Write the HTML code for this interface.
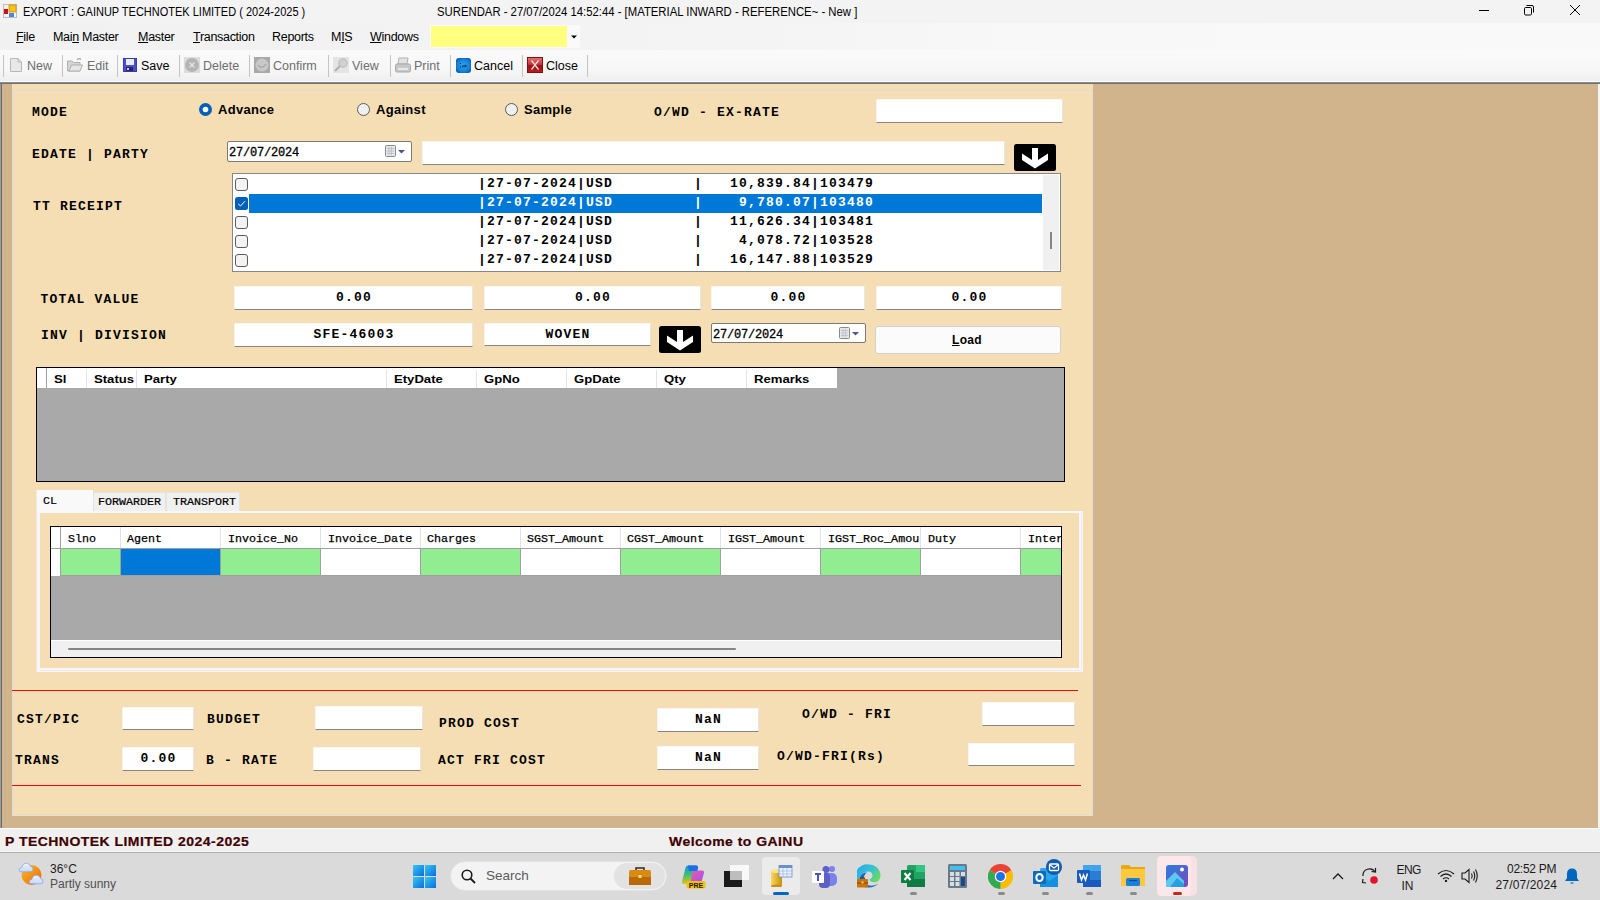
<!DOCTYPE html>
<html><head><meta charset="utf-8">
<style>
*{margin:0;padding:0;box-sizing:border-box}
html,body{width:1600px;height:900px;overflow:hidden;background:#f0f0f0;font-family:"Liberation Sans",sans-serif;position:relative}
.a{position:absolute}
.t{position:absolute;white-space:pre;line-height:1}
.mono{font-family:"Liberation Mono",monospace;font-weight:bold}
.sans{font-family:"Liberation Sans",sans-serif}
.lbl{font-family:"Liberation Mono",monospace;font-weight:bold;font-size:13px;letter-spacing:1.2px;color:#000}
.tb{position:absolute;background:#fff;border-bottom:1px solid #858585;border-right:1px solid #e6e6e6;border-left:1px solid #f4f4f4;border-top:1px solid #f6f6f6;border-radius:1px}
.tbtxt{font-family:"Liberation Mono",monospace;font-weight:bold;font-size:13px;letter-spacing:1.2px;padding-left:1.2px;color:#000;text-align:center;position:absolute;left:0;right:0;line-height:1}
.g1h{font-family:"Liberation Sans",sans-serif;font-weight:bold;font-size:11.5px;color:#000;transform:scaleX(1.14);transform-origin:0 0}
.g2h{font-family:"Liberation Mono",monospace;font-weight:normal;-webkit-text-stroke:0.25px #000;font-size:11.7px;color:#000}
</style></head><body>

<!-- title bar -->
<div class="a" style="left:0;top:0;width:1600px;height:23px;background:#f3f3f3"></div>
<!-- menu bar -->
<div class="a" style="left:0;top:23px;width:1600px;height:27px;background:linear-gradient(to right,#f1f1f1,#f3f3f3 40%,#f8f8f8 65%,#f9f9f9)"></div>
<!-- toolbar -->
<div class="a" style="left:0;top:50px;width:1600px;height:31px;background:linear-gradient(#fafafa,#f7f7f7 60%,#efefef)"></div><div class="a" style="left:0;top:81px;width:1600px;height:1px;background:#fdfdfd"></div>
<div class="a" style="left:0;top:82px;width:1600px;height:2px;background:linear-gradient(#9a9a9a,#5f6368)"></div>

<!-- MDI area -->
<div class="a" style="left:0;top:84px;width:1600px;height:744px;background:#d2b48c"></div>
<div class="a" style="left:0;top:84px;width:1px;height:744px;background:#9c9c9c"></div><div class="a" style="left:1px;top:84px;width:1px;height:744px;background:#6a6a6a"></div>
<div class="a" style="left:1598px;top:84px;width:2px;height:744px;background:#f4f4f4"></div>

<!-- form panel -->
<div class="a" style="left:12px;top:84px;width:1081px;height:732px;background:#f5deb3"></div>
<div class="a" style="left:12px;top:90px;width:1081px;height:725px;border:1px solid #dcdcdc"></div>

<!-- status bar -->
<div class="a" style="left:0;top:828px;width:1600px;height:1px;background:#fff"></div>
<div class="a" style="left:0;top:829px;width:1600px;height:23px;background:#f0f0f0"></div>

<!-- taskbar -->
<div class="a" style="left:0;top:851px;width:1600px;height:1px;background:#f5f5f5"></div><div class="a" style="left:0;top:852px;width:1600px;height:1px;background:#b0b0b0"></div>
<div class="a" style="left:0;top:853px;width:1600px;height:47px;background:#dadada"></div>

<!-- TITLE CONTENT -->
<svg class="a" style="left:3px;top:4px" width="14" height="14" viewBox="0 0 14 14">
<rect x="0.5" y="0.5" width="13" height="13" fill="#f4f4f4" stroke="#bdbdbd"/>
<rect x="6" y="1" width="7" height="7" fill="#f7c21a" stroke="#c9930a" stroke-width="0.8"/>
<rect x="1" y="5" width="4" height="5" fill="#d01010"/>
<rect x="6" y="9" width="5" height="4" fill="#4a86e8"/>
</svg>
<div class="t" style="left:23px;top:6px;font-size:12.5px;color:#000;transform:scaleX(0.88);transform-origin:0 0">EXPORT : GAINUP TECHNOTEK LIMITED ( 2024-2025 )</div>
<div class="t" style="left:437px;top:6px;font-size:12.5px;color:#000;transform:scaleX(0.906);transform-origin:0 0">SURENDAR - 27/07/2024 14:52:44 - [MATERIAL INWARD - REFERENCE~ - New ]</div>
<div class="a" style="left:1479px;top:10px;width:10px;height:1px;background:#000"></div>
<svg class="a" style="left:1523px;top:4px" width="12" height="12" viewBox="0 0 12 12"><rect x="1.5" y="3.5" width="7" height="7.5" rx="1.2" fill="none" stroke="#000" stroke-width="1"/><path d="M3.5 1.5 H9 Q10.5 1.5 10.5 3 V8.5" fill="none" stroke="#000" stroke-width="1"/></svg>
<svg class="a" style="left:1569px;top:4px" width="12" height="12" viewBox="0 0 12 12"><path d="M1 1 L11 11 M11 1 L1 11" stroke="#000" stroke-width="1"/></svg>

<!-- MENU -->
<div class="t" style="left:16px;top:31px;font-size:12.5px;color:#000;letter-spacing:-0.3px"><u>F</u>ile</div>
<div class="t" style="left:53px;top:31px;font-size:12.5px;color:#000;letter-spacing:-0.3px">Mai<u>n</u> Master</div>
<div class="t" style="left:138px;top:31px;font-size:12.5px;color:#000;letter-spacing:-0.3px"><u>M</u>aster</div>
<div class="t" style="left:193px;top:31px;font-size:12.5px;color:#000;letter-spacing:-0.3px"><u>T</u>ransaction</div>
<div class="t" style="left:272px;top:31px;font-size:12.5px;color:#000;letter-spacing:-0.3px">Reports</div>
<div class="t" style="left:331px;top:31px;font-size:12.5px;color:#000;letter-spacing:-0.3px">M<u>I</u>S</div>
<div class="t" style="left:370px;top:31px;font-size:12.5px;color:#000;letter-spacing:-0.3px"><u>W</u>indows</div>
<div class="a" style="left:430px;top:25px;width:150px;height:23px;background:#fafafa"></div>
<div class="a" style="left:431px;top:26px;width:136px;height:21px;background:#ffff80"></div>
<svg class="a" style="left:571px;top:35px" width="6" height="4" viewBox="0 0 6 4"><path d="M0 0.5 H6 L3 3.5Z" fill="#000"/></svg>
<!-- TOOLBAR -->
<div class="a" style="left:3px;top:55px;width:1px;height:22px;background:#c4c4c4"></div>
<div class="a" style="left:62px;top:55px;width:1px;height:22px;background:#c4c4c4"></div>
<div class="a" style="left:117px;top:55px;width:1px;height:22px;background:#c4c4c4"></div>
<div class="a" style="left:179px;top:55px;width:1px;height:22px;background:#c4c4c4"></div>
<div class="a" style="left:249px;top:55px;width:1px;height:22px;background:#c4c4c4"></div>
<div class="a" style="left:328px;top:55px;width:1px;height:22px;background:#c4c4c4"></div>
<div class="a" style="left:390px;top:55px;width:1px;height:22px;background:#c4c4c4"></div>
<div class="a" style="left:450px;top:55px;width:1px;height:22px;background:#c4c4c4"></div>
<div class="a" style="left:522px;top:55px;width:1px;height:22px;background:#c4c4c4"></div>
<div class="a" style="left:587px;top:55px;width:1px;height:22px;background:#c4c4c4"></div>
<!-- New icon -->
<svg class="a" style="left:10px;top:58px" width="12" height="14" viewBox="0 0 12 14"><path d="M0.5 0.5 H8 L11.5 4 V13.5 H0.5Z" fill="#e8e8e8" stroke="#b8b8b8"/><path d="M8 0.5 V4 H11.5" fill="none" stroke="#b8b8b8"/></svg>
<div class="t" style="left:27px;top:60px;font-size:12.5px;color:#6e6e6e">New</div>
<!-- Edit icon -->
<svg class="a" style="left:67px;top:57px" width="16" height="15" viewBox="0 0 16 15"><path d="M0.5 4 H5 L6.5 5.5 H13 V14 H0.5Z" fill="#d6d6d6" stroke="#b0b0b0"/><path d="M2 14 L4.5 8 H15.5 L13 14Z" fill="#e6e6e6" stroke="#b0b0b0"/><path d="M10 3 Q12 0.5 14 2.5" fill="none" stroke="#a8a8a8" stroke-width="1.3"/></svg>
<div class="t" style="left:87px;top:60px;font-size:12.5px;color:#6e6e6e">Edit</div>
<!-- Save icon -->
<svg class="a" style="left:123px;top:58px" width="14" height="14" viewBox="0 0 14 14"><rect x="0" y="0" width="14" height="14" fill="#3a3aa8"/><rect x="1" y="1" width="12" height="12" fill="#4e4ec8"/><rect x="3" y="1" width="8" height="6" fill="#e8ecf8"/><rect x="3" y="9" width="7" height="4" fill="#26266e"/><rect x="4" y="10" width="2" height="2" fill="#c8c8e8"/></svg>
<div class="t" style="left:141px;top:60px;font-size:12.5px;color:#000">Save</div>
<!-- Delete icon -->
<svg class="a" style="left:184px;top:57px" width="16" height="16" viewBox="0 0 16 16"><rect width="16" height="16" fill="#dcdcdc"/><circle cx="8" cy="8" r="7" fill="#b4b4b4"/><path d="M5.5 5.5 L10.5 10.5 M10.5 5.5 L5.5 10.5" stroke="#e6e6e6" stroke-width="1.2"/></svg>
<div class="t" style="left:203px;top:60px;font-size:12.5px;color:#6e6e6e">Delete</div>
<!-- Confirm icon -->
<svg class="a" style="left:254px;top:57px" width="16" height="16" viewBox="0 0 16 16"><rect width="16" height="16" fill="#a8a8a8"/><circle cx="8" cy="8" r="6.5" fill="#c8c8c8"/><path d="M4 8 Q8 13 12 7" fill="none" stroke="#a0a0a0" stroke-width="1.2"/></svg>
<div class="t" style="left:273px;top:60px;font-size:12.5px;color:#6e6e6e">Confirm</div>
<!-- View icon -->
<svg class="a" style="left:333px;top:57px" width="16" height="16" viewBox="0 0 16 16"><rect width="16" height="16" fill="#e4e4e4"/><circle cx="10" cy="6" r="4.2" fill="#d0d0d0" stroke="#b8b8b8"/><path d="M7 9 L2 14" stroke="#b0b0b0" stroke-width="2.2"/></svg>
<div class="t" style="left:352px;top:60px;font-size:12.5px;color:#6e6e6e">View</div>
<!-- Print icon -->
<svg class="a" style="left:395px;top:57px" width="16" height="16" viewBox="0 0 16 16"><path d="M4 1 H13 L12 7 H3Z" fill="#e2e2e2" stroke="#b4b4b4"/><rect x="0.5" y="7" width="15" height="8" rx="1.5" fill="#c8c8c8" stroke="#a8a8a8"/><rect x="3" y="11" width="10" height="2" fill="#e8e8e8"/></svg>
<div class="t" style="left:414px;top:60px;font-size:12.5px;color:#6e6e6e">Print</div>
<!-- Cancel icon -->
<svg class="a" style="left:456px;top:58px" width="15" height="15" viewBox="0 0 15 15"><defs><radialGradient id="cg" cx="0.5" cy="0.5" r="0.6"><stop offset="0" stop-color="#30a8f4"/><stop offset="0.7" stop-color="#1280d8"/><stop offset="1" stop-color="#0a58b0"/></radialGradient></defs><rect x="0" y="0" width="15" height="15" rx="3" fill="url(#cg)"/><rect x="4" y="5" width="1" height="1" fill="#05203a"/><rect x="4" y="8.5" width="1" height="1" fill="#05203a"/><rect x="6.5" y="7" width="1" height="2.5" fill="#05203a"/><path d="M8.5 6.5 L11 8 L8.5 9.5Z" fill="#05203a"/></svg>
<div class="t" style="left:474px;top:60px;font-size:12.5px;color:#000">Cancel</div>
<!-- Close icon -->
<svg class="a" style="left:527px;top:57px" width="16" height="16" viewBox="0 0 16 16"><defs><linearGradient id="xg" x1="0" y1="0" x2="0" y2="1"><stop offset="0" stop-color="#e87878"/><stop offset="0.45" stop-color="#c83838"/><stop offset="0.55" stop-color="#a01010"/><stop offset="1" stop-color="#b82020"/></linearGradient></defs><rect width="16" height="16" fill="url(#xg)"/><rect x="0.5" y="0.5" width="15" height="15" fill="none" stroke="#801010" stroke-width="1"/><path d="M4.5 3.5 L11.5 12.5 M11.5 3.5 L4.5 12.5" stroke="#e8e0e0" stroke-width="1.3"/></svg>
<div class="t" style="left:546px;top:60px;font-size:12.5px;color:#000">Close</div>
<!-- FORM ROW 1 -->
<div class="t lbl" style="left:32px;top:106px">MODE</div>
<svg class="a" style="left:199px;top:103px" width="13" height="13" viewBox="0 0 13 13"><circle cx="6.5" cy="6.5" r="6.5" fill="#005fb8"/><circle cx="6.5" cy="6.5" r="2.8" fill="#fff"/></svg>
<div class="t" style="left:218px;top:103px;font-size:13px;font-weight:bold;color:#000;letter-spacing:0.3px">Advance</div>
<svg class="a" style="left:357px;top:103px" width="13" height="13" viewBox="0 0 13 13"><circle cx="6.5" cy="6.5" r="6" fill="#f0f0f0" stroke="#5a5a5a" stroke-width="1"/></svg>
<div class="t" style="left:376px;top:103px;font-size:13px;font-weight:bold;color:#000;letter-spacing:0.3px">Against</div>
<svg class="a" style="left:505px;top:103px" width="13" height="13" viewBox="0 0 13 13"><circle cx="6.5" cy="6.5" r="6" fill="#f0f0f0" stroke="#5a5a5a" stroke-width="1"/></svg>
<div class="t" style="left:524px;top:103px;font-size:13px;font-weight:bold;color:#000;letter-spacing:0.3px">Sample</div>
<div class="t lbl" style="left:654px;top:106px">O/WD - EX-RATE</div>
<div class="tb" style="left:876px;top:99px;width:187px;height:24px"></div>

<!-- ROW 2 -->
<div class="t lbl" style="left:32px;top:148px">EDATE | PARTY</div>
<div class="a" style="left:227px;top:141px;width:185px;height:21px;background:#fff;border:1px solid #7a7a7a;border-radius:2px"></div>
<div class="t mono" style="left:229px;top:146.5px;font-size:12px;color:#000;font-weight:normal;-webkit-text-stroke:0.3px #000;letter-spacing:-0.2px">27/07/2024</div>
<svg class="a" style="left:385px;top:145px" width="22" height="12" viewBox="0 0 22 12"><rect x="0.5" y="0.5" width="10" height="11" rx="1" fill="#e4e6ea" stroke="#8a8a8a"/><path d="M2 3.5H9M2 6H9M2 8.5H9M4 2V10M6.5 2V10" stroke="#b8bcc4" stroke-width="0.8"/><path d="M13 5 H20 L16.5 8.5Z" fill="#4a5a78"/></svg>
<div class="tb" style="left:422px;top:141px;width:583px;height:24px"></div>
<svg class="a" style="left:1014px;top:144px" width="42" height="27" viewBox="0 0 42 27"><rect x="0" y="0" width="42" height="27" rx="2.5" fill="#000"/><path d="M18 4 H24 V16 L34 9.5 V16 L21 24.5 L8 16 V9.5 L18 16Z" fill="#fff"/></svg>

<!-- LIST -->
<div class="t lbl" style="left:33px;top:199.5px">TT RECEIPT</div>
<div class="a" style="left:232px;top:173px;width:829px;height:99px;background:#fff;border:1px solid #828790"></div>
<div class="a" style="left:1043px;top:175px;width:16px;height:95px;background:#f0f0f0"></div>
<div class="a" style="left:1050px;top:232px;width:2px;height:17px;background:#868686"></div>
<div class="a" style="left:249px;top:194px;width:793px;height:19px;background:#0078d7"></div>
<!-- checkboxes -->
<svg class="a" style="left:235px;top:178px" width="13" height="13" viewBox="0 0 13 13"><rect x="0.5" y="0.5" width="12" height="12" rx="2.5" fill="#f3f3f3" stroke="#5c5c5c"/></svg>
<svg class="a" style="left:235px;top:197px" width="13" height="13" viewBox="0 0 13 13"><rect x="0" y="0" width="13" height="13" rx="2.5" fill="#005fb8"/><path d="M3.2 6.8 L5.5 9 L10 4.2" fill="none" stroke="#fff" stroke-width="1"/></svg>
<svg class="a" style="left:235px;top:216px" width="13" height="13" viewBox="0 0 13 13"><rect x="0.5" y="0.5" width="12" height="12" rx="2.5" fill="#f3f3f3" stroke="#5c5c5c"/></svg>
<svg class="a" style="left:235px;top:235px" width="13" height="13" viewBox="0 0 13 13"><rect x="0.5" y="0.5" width="12" height="12" rx="2.5" fill="#f3f3f3" stroke="#5c5c5c"/></svg>
<svg class="a" style="left:235px;top:254px" width="13" height="13" viewBox="0 0 13 13"><rect x="0.5" y="0.5" width="12" height="12" rx="2.5" fill="#f3f3f3" stroke="#5c5c5c"/></svg>
<div class="t lbl" style="left:478px;top:177px">|27-07-2024|USD         |   10,839.84|103479</div>
<div class="t lbl" style="left:478px;top:196px;color:#fff">|27-07-2024|USD         |    9,780.07|103480</div>
<div class="t lbl" style="left:478px;top:215px">|27-07-2024|USD         |   11,626.34|103481</div>
<div class="t lbl" style="left:478px;top:234px">|27-07-2024|USD         |    4,078.72|103528</div>
<div class="t lbl" style="left:478px;top:253px">|27-07-2024|USD         |   16,147.88|103529</div>

<!-- TOTAL VALUE -->
<div class="t lbl" style="left:40.5px;top:293px">TOTAL VALUE</div>
<div class="tb" style="left:234px;top:286px;width:239px;height:24px"><div class="tbtxt" style="top:4px">0.00</div></div>
<div class="tb" style="left:484px;top:286px;width:217px;height:24px"><div class="tbtxt" style="top:4px">0.00</div></div>
<div class="tb" style="left:711px;top:286px;width:154px;height:24px"><div class="tbtxt" style="top:4px">0.00</div></div>
<div class="tb" style="left:876px;top:286px;width:186px;height:24px"><div class="tbtxt" style="top:4px">0.00</div></div>

<!-- INV | DIVISION -->
<div class="t lbl" style="left:41px;top:329px">INV | DIVISION</div>
<div class="tb" style="left:234px;top:323px;width:239px;height:24px"><div class="tbtxt" style="top:4px">SFE-46003</div></div>
<div class="tb" style="left:484px;top:323px;width:167px;height:23px"><div class="tbtxt" style="top:4px">WOVEN</div></div>
<svg class="a" style="left:659px;top:326px" width="42" height="27" viewBox="0 0 42 27"><rect x="0" y="0" width="42" height="27" rx="2.5" fill="#000"/><path d="M18 4 H24 V16 L34 9.5 V16 L21 24.5 L8 16 V9.5 L18 16Z" fill="#fff"/></svg>
<div class="a" style="left:711px;top:323px;width:155px;height:20px;background:#fff;border:1px solid #7a7a7a;border-radius:2px"></div>
<div class="t mono" style="left:713px;top:328.5px;font-size:12px;color:#000;font-weight:normal;-webkit-text-stroke:0.3px #000;letter-spacing:-0.2px">27/07/2024</div>
<svg class="a" style="left:839px;top:327px" width="22" height="12" viewBox="0 0 22 12"><rect x="0.5" y="0.5" width="10" height="11" rx="1" fill="#e4e6ea" stroke="#8a8a8a"/><path d="M2 3.5H9M2 6H9M2 8.5H9M4 2V10M6.5 2V10" stroke="#b8bcc4" stroke-width="0.8"/><path d="M13 5 H20 L16.5 8.5Z" fill="#4a5a78"/></svg>
<div class="a" style="left:875px;top:326px;width:186px;height:28px;background:#fbfbfb;border:1px solid #d0d0d0;border-radius:3px"></div>
<div class="t" style="left:952px;top:334px;font-size:12px;font-weight:bold;color:#000;letter-spacing:0.3px"><u>L</u>oad</div>
<!-- GRID 1 -->
<div class="a" style="left:36px;top:367px;width:1029px;height:115px;background:#a9a9a9;border:1px solid #000"></div>
<div class="a" style="left:37px;top:368px;width:800px;height:20px;background:#fff"></div>
<div class="a" style="left:46px;top:368px;width:1px;height:20px;background:#a0a0a0"></div>
<div class="a" style="left:86px;top:370px;width:1px;height:18px;background:#e3e3e3"></div>
<div class="a" style="left:136px;top:370px;width:1px;height:18px;background:#e3e3e3"></div>
<div class="a" style="left:386px;top:370px;width:1px;height:18px;background:#e3e3e3"></div>
<div class="a" style="left:476px;top:370px;width:1px;height:18px;background:#e3e3e3"></div>
<div class="a" style="left:566px;top:370px;width:1px;height:18px;background:#e3e3e3"></div>
<div class="a" style="left:656px;top:370px;width:1px;height:18px;background:#e3e3e3"></div>
<div class="a" style="left:746px;top:370px;width:1px;height:18px;background:#e3e3e3"></div>
<div class="t g1h" style="left:54px;top:374px">Sl</div>
<div class="t g1h" style="left:94px;top:374px">Status</div>
<div class="t g1h" style="left:144px;top:374px">Party</div>
<div class="t g1h" style="left:394px;top:374px">EtyDate</div>
<div class="t g1h" style="left:484px;top:374px">GpNo</div>
<div class="t g1h" style="left:574px;top:374px">GpDate</div>
<div class="t g1h" style="left:664px;top:374px">Qty</div>
<div class="t g1h" style="left:754px;top:374px">Remarks</div>

<!-- TABS -->
<div class="a" style="left:93px;top:492px;width:73px;height:20px;background:#f0f0f0;border:1px solid #e3e3e3;border-bottom:none"></div>
<div class="a" style="left:166px;top:492px;width:74px;height:20px;background:#f0f0f0;border:1px solid #e3e3e3;border-bottom:none"></div>
<div class="a" style="left:36px;top:511px;width:1047px;height:161px;border:4px solid #f7f7f9;border-top-width:2px"></div><div class="a" style="left:36px;top:511px;width:1px;height:161px;background:#ebebef"></div><div class="a" style="left:1081px;top:513px;width:1px;height:157px;background:#ebebef"></div><div class="a" style="left:40px;top:670px;width:1041px;height:1px;background:#ebebef"></div>
<div class="a" style="left:36px;top:490px;width:57px;height:23px;background:#f9f9f9"></div><div class="a" style="left:36px;top:490px;width:1px;height:23px;background:#ebebef"></div>
<div class="t mono" style="left:43px;top:496px;font-size:11.7px;color:#000;font-weight:normal;-webkit-text-stroke:0.2px #000">CL</div>
<div class="t mono" style="left:98px;top:497px;font-size:11.7px;color:#000;font-weight:normal;-webkit-text-stroke:0.2px #000">FORWARDER</div>
<div class="t mono" style="left:173px;top:497px;font-size:11.7px;color:#000;font-weight:normal;-webkit-text-stroke:0.2px #000">TRANSPORT</div>

<!-- GRID 2 -->
<div class="a" style="left:50px;top:526px;width:1012px;height:132px;background:#a9a9a9;border:1px solid #000"></div>
<div class="a" style="left:51px;top:527px;width:1010px;height:21px;background:#fff"></div>
<div class="a" style="left:51px;top:548px;width:1010px;height:1px;background:#a0a0a0"></div>
<div class="a" style="left:51px;top:549px;width:9px;height:27px;background:#fff"></div>
<div class="a" style="left:60px;top:527px;width:1px;height:49px;background:#a0a0a0"></div>
<div class="a" style="left:61px;top:549px;width:59px;height:26px;background:#90ee90"></div>
<div class="a" style="left:121px;top:549px;width:99px;height:26px;background:#0078d7"></div>
<div class="a" style="left:221px;top:549px;width:99px;height:26px;background:#90ee90"></div>
<div class="a" style="left:321px;top:549px;width:99px;height:26px;background:#fff"></div>
<div class="a" style="left:421px;top:549px;width:99px;height:26px;background:#90ee90"></div>
<div class="a" style="left:521px;top:549px;width:99px;height:26px;background:#fff"></div>
<div class="a" style="left:621px;top:549px;width:99px;height:26px;background:#90ee90"></div>
<div class="a" style="left:721px;top:549px;width:99px;height:26px;background:#fff"></div>
<div class="a" style="left:821px;top:549px;width:99px;height:26px;background:#90ee90"></div>
<div class="a" style="left:921px;top:549px;width:99px;height:26px;background:#fff"></div>
<div class="a" style="left:1021px;top:549px;width:40px;height:26px;background:#90ee90"></div>
<div class="a" style="left:61px;top:575px;width:1000px;height:1px;background:#a0a0a0"></div>
<div class="a" style="left:120px;top:527px;width:1px;height:21px;background:#e3e3e3"></div>
<div class="a" style="left:220px;top:527px;width:1px;height:21px;background:#e3e3e3"></div>
<div class="a" style="left:320px;top:527px;width:1px;height:21px;background:#e3e3e3"></div>
<div class="a" style="left:420px;top:527px;width:1px;height:21px;background:#e3e3e3"></div>
<div class="a" style="left:520px;top:527px;width:1px;height:21px;background:#e3e3e3"></div>
<div class="a" style="left:620px;top:527px;width:1px;height:21px;background:#e3e3e3"></div>
<div class="a" style="left:720px;top:527px;width:1px;height:21px;background:#e3e3e3"></div>
<div class="a" style="left:820px;top:527px;width:1px;height:21px;background:#e3e3e3"></div>
<div class="a" style="left:920px;top:527px;width:1px;height:21px;background:#e3e3e3"></div>
<div class="a" style="left:1020px;top:527px;width:1px;height:21px;background:#e3e3e3"></div>
<div class="a" style="left:120px;top:549px;width:1px;height:26px;background:#a0a0a0"></div>
<div class="a" style="left:220px;top:549px;width:1px;height:26px;background:#a0a0a0"></div>
<div class="a" style="left:320px;top:549px;width:1px;height:26px;background:#a0a0a0"></div>
<div class="a" style="left:420px;top:549px;width:1px;height:26px;background:#a0a0a0"></div>
<div class="a" style="left:520px;top:549px;width:1px;height:26px;background:#a0a0a0"></div>
<div class="a" style="left:620px;top:549px;width:1px;height:26px;background:#a0a0a0"></div>
<div class="a" style="left:720px;top:549px;width:1px;height:26px;background:#a0a0a0"></div>
<div class="a" style="left:820px;top:549px;width:1px;height:26px;background:#a0a0a0"></div>
<div class="a" style="left:920px;top:549px;width:1px;height:26px;background:#a0a0a0"></div>
<div class="a" style="left:1020px;top:549px;width:1px;height:26px;background:#a0a0a0"></div>
<div style="position:absolute;left:51px;top:527px;width:1010px;height:21px;overflow:hidden">
<div class="t g2h" style="top:7px;left:17px;">Slno</div>
<div class="t g2h" style="top:7px;left:76px;">Agent</div>
<div class="t g2h" style="top:7px;left:177px;">Invoice_No</div>
<div class="t g2h" style="top:7px;left:277px;">Invoice_Date</div>
<div class="t g2h" style="top:7px;left:376px;">Charges</div>
<div class="t g2h" style="top:7px;left:476px;">SGST_Amount</div>
<div class="t g2h" style="top:7px;left:576px;">CGST_Amount</div>
<div class="t g2h" style="top:7px;left:677px;">IGST_Amount</div>
<div class="t g2h" style="top:7px;left:777px;">IGST_Roc_Amou</div>
<div class="t g2h" style="top:7px;left:877px;">Duty</div>
<div class="t g2h" style="top:7px;left:977px;">Interest</div>
</div>
<div class="a" style="left:51px;top:640px;width:1010px;height:1px;background:#fff"></div>
<div class="a" style="left:51px;top:641px;width:1010px;height:16px;background:#f0f0f0"></div>
<div class="a" style="left:68px;top:648px;width:668px;height:2px;background:#858585;border-radius:1px"></div>
<!-- BOTTOM -->
<div class="a" style="left:12px;top:690px;width:1066px;height:1px;background:#f00"></div>
<div class="a" style="left:12px;top:785px;width:1069px;height:1px;background:#f00"></div>
<div class="t lbl" style="left:17px;top:713px">CST/PIC</div>
<div class="tb" style="left:122px;top:707px;width:72px;height:23px"></div>
<div class="t lbl" style="left:207px;top:713px">BUDGET</div>
<div class="tb" style="left:315px;top:706px;width:108px;height:24px"></div>
<div class="t lbl" style="left:439px;top:717px">PROD COST</div>
<div class="tb" style="left:657px;top:708px;width:102px;height:24px"><div class="tbtxt" style="top:4px">NaN</div></div>
<div class="t lbl" style="left:802px;top:708px">O/WD - FRI</div>
<div class="tb" style="left:982px;top:702px;width:93px;height:24px"></div>

<div class="t lbl" style="left:15px;top:754px">TRANS</div>
<div class="tb" style="left:122px;top:747px;width:72px;height:24px"><div class="tbtxt" style="top:4px">0.00</div></div>
<div class="t lbl" style="left:206px;top:754px">B - RATE</div>
<div class="tb" style="left:313px;top:747px;width:108px;height:24px"></div>
<div class="t lbl" style="left:438px;top:754px">ACT FRI COST</div>
<div class="tb" style="left:657px;top:746px;width:102px;height:24px"><div class="tbtxt" style="top:4px">NaN</div></div>
<div class="t lbl" style="left:777px;top:750px">O/WD-FRI(Rs)</div>
<div class="tb" style="left:968px;top:743px;width:107px;height:23px"></div>

<!-- STATUS -->
<div class="t" style="left:4.5px;top:836px;font-size:12.5px;font-weight:bold;color:#400000;transform:scaleX(1.12);letter-spacing:0.41px;transform-origin:0 0;-webkit-text-stroke:0.2px #400000">P TECHNOTEK LIMITED 2024-2025</div>
<div class="t" style="left:668.5px;top:836px;font-size:12.5px;font-weight:bold;color:#400000;transform:scaleX(1.12);letter-spacing:0.4px;transform-origin:0 0;-webkit-text-stroke:0.2px #400000">Welcome to GAINU</div>
<!-- TASKBAR -->
<svg class="a" style="left:14px;top:858px" width="34" height="32" viewBox="0 0 34 32"><defs><linearGradient id="sun" x1="0" y1="0" x2="1" y2="1"><stop offset="0" stop-color="#f8c020"/><stop offset="1" stop-color="#f06008"/></linearGradient><linearGradient id="cld" x1="0" y1="0" x2="0" y2="1"><stop offset="0" stop-color="#eef4fd"/><stop offset="1" stop-color="#c4d8f6"/></linearGradient></defs><circle cx="17.5" cy="17" r="10" fill="url(#sun)"/><path d="M7 13.8 Q5 13.8 5.2 11.5 Q5.6 9.4 7.8 9.6 Q9 5 12.5 5.2 Q15.8 5.4 16.6 8.6 Q19 8.4 19 11.2 Q19 13.8 17 13.8Z" fill="url(#cld)" stroke="#7ea4e6" stroke-width="0.7"/><path d="M17 25.8 Q15 25.8 15.2 23.4 Q15.6 21.4 17.8 21.6 Q19 17 22.5 17.2 Q25.8 17.4 26.6 20.6 Q29 20.4 29 23.2 Q29 25.8 27 25.8Z" fill="url(#cld)" stroke="#7ea4e6" stroke-width="0.7"/></svg>
<div class="t" style="left:50px;top:863px;font-size:12px;color:#1a1a1a">36°C</div>
<div class="t" style="left:50px;top:878px;font-size:12px;color:#505050">Partly sunny</div>

<svg class="a" style="left:413px;top:865px" width="23" height="23" viewBox="0 0 23 23"><defs><linearGradient id="wg" x1="0" y1="0" x2="1" y2="1"><stop offset="0" stop-color="#36c6f8"/><stop offset="1" stop-color="#0a6fd8"/></linearGradient></defs><rect x="0" y="0" width="11" height="11" fill="url(#wg)"/><rect x="12" y="0" width="11" height="11" fill="url(#wg)"/><rect x="0" y="12" width="11" height="11" fill="url(#wg)"/><rect x="12" y="12" width="11" height="11" fill="url(#wg)"/></svg>
<div class="a" style="left:450px;top:861px;width:217px;height:30px;border-radius:15px;background:#f3f3f3;border:1px solid #e2e2e2"></div>
<div class="a" style="left:614px;top:863px;width:51px;height:26px;border-radius:13px;background:#e2e2e2"></div>
<svg class="a" style="left:461px;top:869px" width="15" height="15" viewBox="0 0 15 15"><circle cx="6" cy="6" r="4.8" fill="none" stroke="#1a1a1a" stroke-width="1.6"/><path d="M9.5 9.5 L14 14" stroke="#1a1a1a" stroke-width="1.8"/></svg>
<div class="t" style="left:486px;top:869px;font-size:13.5px;color:#5c5c5c">Search</div>
<svg class="a" style="left:629px;top:867px" width="22" height="18" viewBox="0 0 22 18"><path d="M7 3 V1 H15 V3" fill="none" stroke="#3a2a10" stroke-width="1.5"/><rect x="0" y="3" width="22" height="15" rx="1.5" fill="#d98a10"/><rect x="0" y="10" width="22" height="8" fill="#b86a08"/><rect x="9.5" y="8" width="3" height="3" fill="#ffe070"/></svg>
<svg class="a" style="left:681px;top:865px" width="25" height="24" viewBox="0 0 25 24"><defs><linearGradient id="cpl" x1="0.2" y1="0" x2="0.3" y2="1"><stop offset="0" stop-color="#1a8cf0"/><stop offset="0.5" stop-color="#3cc070"/><stop offset="1" stop-color="#e8c020"/></linearGradient><linearGradient id="cpr" x1="0" y1="0" x2="1" y2="1"><stop offset="0" stop-color="#f05ab0"/><stop offset="1" stop-color="#9a50f0"/></linearGradient></defs><path d="M7 0.5 H15 Q17.5 0.5 17 3 L13 17 Q12.5 19 10.5 19 H3 Q0.5 19 1 16.5 L4.5 3 Q5 0.5 7 0.5Z" fill="url(#cpl)"/><path d="M12 5.5 H21 Q23.5 5.5 23 8 L20.5 17 Q20 19.5 17.5 19.5 H9Z" fill="url(#cpr)"/><path d="M7 0.5 H15 Q17.5 0.5 17 3 L16 6 H8Z" fill="#1a6ee8"/><rect x="5.5" y="16" width="19" height="7.5" rx="2" fill="#f8c000"/><text x="15" y="22.5" font-family="Liberation Sans" font-weight="bold" font-size="7" text-anchor="middle" fill="#1a1a1a">PRE</text></svg>
<svg class="a" style="left:724px;top:865px" width="25" height="22" viewBox="0 0 25 22"><rect x="6" y="0" width="19" height="15" fill="#f8f8f8"/><rect x="0" y="6" width="18" height="16" fill="#1a1a1a"/><rect x="6" y="6" width="12" height="9" fill="#bdbdbd"/></svg>
<div class="a" style="left:762px;top:857px;width:38px;height:38px;border-radius:4px;background:#ebebeb"></div>
<svg class="a" style="left:771px;top:865px" width="22" height="22" viewBox="0 0 22 22"><defs><linearGradient id="db" x1="0" x2="1"><stop offset="0" stop-color="#f8d860"/><stop offset="1" stop-color="#c8900a"/></linearGradient></defs><rect x="0" y="6" width="11" height="15" rx="1" fill="url(#db)"/><ellipse cx="5.5" cy="6" rx="5.5" ry="2" fill="#f8e488"/><ellipse cx="5.5" cy="21" rx="5.5" ry="1.5" fill="#c8900a"/><rect x="8" y="0" width="13" height="12" fill="#e8f0fc" stroke="#6a90c8" stroke-width="0.8"/><rect x="8" y="0" width="13" height="3" fill="#6a90c8"/><path d="M8 6H21M8 9H21M12 3V12M16 3V12" stroke="#9ab4dc" stroke-width="0.6"/></svg>
<div class="a" style="left:773px;top:892px;width:16px;height:3px;border-radius:2px;background:#0067c0"></div>
<svg class="a" style="left:812px;top:865px" width="26" height="23" viewBox="0 0 26 23"><circle cx="20" cy="4" r="3" fill="#7b83eb"/><circle cx="14" cy="4.5" r="3.5" fill="#5b5fc7"/><rect x="11" y="8" width="14" height="13" rx="5" fill="#7b83eb"/><rect x="7" y="8" width="11" height="15" rx="4" fill="#5b5fc7"/><rect x="0" y="6" width="12" height="12" rx="1" fill="#fff"/><path d="M3 9H9M6 9V16" stroke="#4b53bc" stroke-width="2"/></svg>
<svg class="a" style="left:857px;top:864px" width="24" height="24" viewBox="0 0 24 24"><defs><linearGradient id="ed" x1="0" y1="0" x2="1" y2="0.6"><stop offset="0" stop-color="#2aa8e8"/><stop offset="0.55" stop-color="#34c0d8"/><stop offset="1" stop-color="#6ada5a"/></linearGradient></defs><path d="M12 0.5 A11.5 11.5 0 0 1 23.5 12 Q23 17 19 18 Q14 19 12.5 15.5 Q16 14 15.5 11 Q15 7.5 11 7.5 Q6 7.8 3.5 12 Q1.5 16 2 20 A11.5 11.5 0 0 1 12 0.5Z" fill="url(#ed)"/><path d="M2 20 Q1.5 16 3.5 12 Q6 8 10 8.5 Q6 11 7 16 Q8.5 21.5 14 21.8 Q18 21.8 21 19.5 Q17.5 23.5 12 23.5 Q5 23.5 2 20Z" fill="#1868c8"/><circle cx="11.5" cy="12" r="3" fill="#dadada"/><rect x="0" y="15" width="11" height="8.5" rx="1" fill="#c8740c"/><rect x="0" y="18.5" width="11" height="1" fill="#8a4a05"/><rect x="4.5" y="17.5" width="2" height="2" fill="#ffd060"/><path d="M3.5 15 V13.8 H7.5 V15" fill="none" stroke="#5a3a10" stroke-width="0.9"/></svg>
<svg class="a" style="left:901px;top:865px" width="24" height="22" viewBox="0 0 24 22"><rect x="6" y="0" width="18" height="22" rx="1.5" fill="#21a366"/><rect x="15" y="0" width="9" height="7" fill="#33c481"/><rect x="6" y="14" width="18" height="8" fill="#107c41"/><rect x="0" y="5" width="13" height="13" rx="1" fill="#107c41"/><path d="M3.5 8 L9.5 15 M9.5 8 L3.5 15" stroke="#fff" stroke-width="2"/></svg>
<div class="a" style="left:910px;top:892px;width:7px;height:3px;border-radius:2px;background:#8a8a8a"></div>
<svg class="a" style="left:948px;top:864px" width="19" height="24" viewBox="0 0 19 24"><rect x="0" y="0" width="19" height="24" rx="1.5" fill="#6a7888"/><rect x="2" y="2" width="15" height="4" fill="#40c0f0"/><g fill="#d8dde4"><rect x="2" y="8" width="4" height="4"/><rect x="7.5" y="8" width="4" height="4"/><rect x="13" y="8" width="4" height="4"/><rect x="2" y="13" width="4" height="4"/><rect x="7.5" y="13" width="4" height="4"/><rect x="2" y="18" width="4" height="4"/><rect x="7.5" y="18" width="4" height="4"/></g><rect x="13" y="13" width="4" height="9" fill="#1a4a8a"/></svg>
<svg class="a" style="left:988px;top:864px" width="25" height="25" viewBox="0 0 24 24"><path d="M12 12 L1.6 6 A12 12 0 0 1 22.4 6Z" fill="#ea4335"/><path d="M12 12 L22.4 6 A12 12 0 0 1 12 24Z" fill="#fbbc04"/><path d="M12 12 L12 24 A12 12 0 0 1 1.6 6Z" fill="#34a853"/><circle cx="12" cy="12" r="5.5" fill="#fff"/><circle cx="12" cy="12" r="4.3" fill="#1a73e8"/></svg>
<div class="a" style="left:998px;top:892px;width:7px;height:3px;border-radius:2px;background:#8a8a8a"></div>
<svg class="a" style="left:1033px;top:859px" width="30" height="28" viewBox="0 0 30 28"><rect x="7" y="9" width="18" height="19" rx="1.5" fill="#28a8ea"/><path d="M7 16 L16 22 L25 16 V28 H7Z" fill="#1490df"/><rect x="0" y="12" width="13" height="13" rx="1" fill="#0f6cbd"/><ellipse cx="6.5" cy="18.5" rx="3.2" ry="3.6" fill="none" stroke="#fff" stroke-width="2"/><circle cx="21" cy="8" r="8" fill="#0f5cb0"/><rect x="16.5" y="5" width="9" height="6.5" rx="1" fill="none" stroke="#fff" stroke-width="1.3"/><path d="M16.5 5.5 L21 9 L25.5 5.5" fill="none" stroke="#fff" stroke-width="1.2"/></svg>
<div class="a" style="left:1042px;top:892px;width:7px;height:3px;border-radius:2px;background:#8a8a8a"></div>
<svg class="a" style="left:1077px;top:865px" width="24" height="22" viewBox="0 0 24 22"><rect x="6" y="0" width="18" height="22" rx="1.5" fill="#2b7cd3"/><rect x="6" y="0" width="18" height="6" fill="#41a5ee"/><rect x="6" y="15" width="18" height="7" fill="#185abd"/><rect x="0" y="5" width="13" height="13" rx="1" fill="#185abd"/><path d="M2.5 8.5 L4.5 15 L6.5 10 L8.5 15 L10.5 8.5" fill="none" stroke="#fff" stroke-width="1.5"/></svg>
<div class="a" style="left:1086px;top:892px;width:7px;height:3px;border-radius:2px;background:#8a8a8a"></div>
<svg class="a" style="left:1121px;top:865px" width="24" height="21" viewBox="0 0 24 21"><path d="M0 1.5 Q0 0 1.5 0 H8 L10 2 H24 V21 H0Z" fill="#e8a810"/><rect x="0" y="4" width="24" height="17" rx="1" fill="#ffc83d"/><rect x="5" y="13" width="14" height="8" rx="1.5" fill="#1a80d8"/><rect x="8" y="15" width="8" height="1.2" fill="#0a4a98"/></svg>
<div class="a" style="left:1130px;top:892px;width:7px;height:3px;border-radius:2px;background:#8a8a8a"></div>
<div class="a" style="left:1185px;top:856px;width:12px;height:40px;border-radius:5px;background:#f7e1e3"></div>
<div class="a" style="left:1157px;top:856px;width:34px;height:40px;border-radius:4px;background:#fce8ea"></div>
<svg class="a" style="left:1166px;top:865px" width="22" height="22" viewBox="0 0 22 22"><defs><linearGradient id="ph" x1="0" y1="0" x2="1" y2="1"><stop offset="0" stop-color="#2a7ee0"/><stop offset="1" stop-color="#7a4ab8"/></linearGradient></defs><rect x="0" y="0" width="22" height="22" rx="3" fill="url(#ph)"/><circle cx="16" cy="4.5" r="2" fill="#fff"/><path d="M0 16 L9 7 L18 16 V22 H0Z" fill="#60c8f0"/><path d="M4 22 L11 13 L18 19 V22Z" fill="#28a0e0"/></svg>
<div class="a" style="left:1173px;top:892px;width:9px;height:3px;border-radius:2px;background:#c42b1c"></div>

<svg class="a" style="left:1332px;top:872px" width="12" height="8" viewBox="0 0 12 8"><path d="M1 7 L6 2 L11 7" fill="none" stroke="#1a1a1a" stroke-width="1.3"/></svg>
<svg class="a" style="left:1361px;top:867px" width="18" height="18" viewBox="0 0 18 18"><path d="M2 9 A6.5 6.5 0 0 1 14 5" fill="none" stroke="#1a1a1a" stroke-width="1.2"/><path d="M10.5 4.5 L14.5 5 L14.5 1" fill="none" stroke="#1a1a1a" stroke-width="1.2"/><path d="M5 16 L1.5 15.5 L2 12" fill="none" stroke="#1a1a1a" stroke-width="1.2"/><circle cx="13" cy="13" r="3.8" fill="#e81123"/></svg>
<div class="t" style="left:1396.5px;top:864px;font-size:12px;color:#1a1a1a;letter-spacing:-0.6px">ENG</div>
<div class="t" style="left:1401.5px;top:879.5px;font-size:12px;color:#1a1a1a">IN</div>
<svg class="a" style="left:1437px;top:869px" width="18" height="13" viewBox="0 0 18 13"><path d="M1 5 Q9 -2 17 5" fill="none" stroke="#1a1a1a" stroke-width="1.2"/><path d="M3.5 7.5 Q9 2.5 14.5 7.5" fill="none" stroke="#1a1a1a" stroke-width="1.2"/><path d="M6 10 Q9 7.5 12 10" fill="none" stroke="#1a1a1a" stroke-width="1.2"/><circle cx="9" cy="12" r="1.2" fill="#1a1a1a"/></svg>
<svg class="a" style="left:1461px;top:868px" width="18" height="16" viewBox="0 0 18 16"><path d="M1 5 H4 L8 1.5 V14.5 L4 11 H1Z" fill="none" stroke="#1a1a1a" stroke-width="1.1"/><path d="M10.5 5.5 Q12 8 10.5 10.5" fill="none" stroke="#1a1a1a" stroke-width="1.1"/><path d="M12.5 3.5 Q15 8 12.5 12.5" fill="none" stroke="#1a1a1a" stroke-width="1.1"/><path d="M14.5 1.5 Q18 8 14.5 14.5" fill="none" stroke="#1a1a1a" stroke-width="1.1"/></svg>
<div class="t" style="left:1507px;top:863px;font-size:12px;color:#1a1a1a;letter-spacing:-0.25px">02:52 PM</div>
<div class="t" style="left:1495.5px;top:879px;font-size:12px;color:#1a1a1a;letter-spacing:0.15px">27/07/2024</div>
<svg class="a" style="left:1565px;top:868px" width="14" height="17" viewBox="0 0 14 17"><path d="M7 0.5 Q12 0.5 12 6 V10 L14 13 H0 L2 10 V6 Q2 0.5 7 0.5Z" fill="#0067c0"/><path d="M5 14.5 Q7 17 9 14.5Z" fill="#0067c0"/></svg>

</body></html>
